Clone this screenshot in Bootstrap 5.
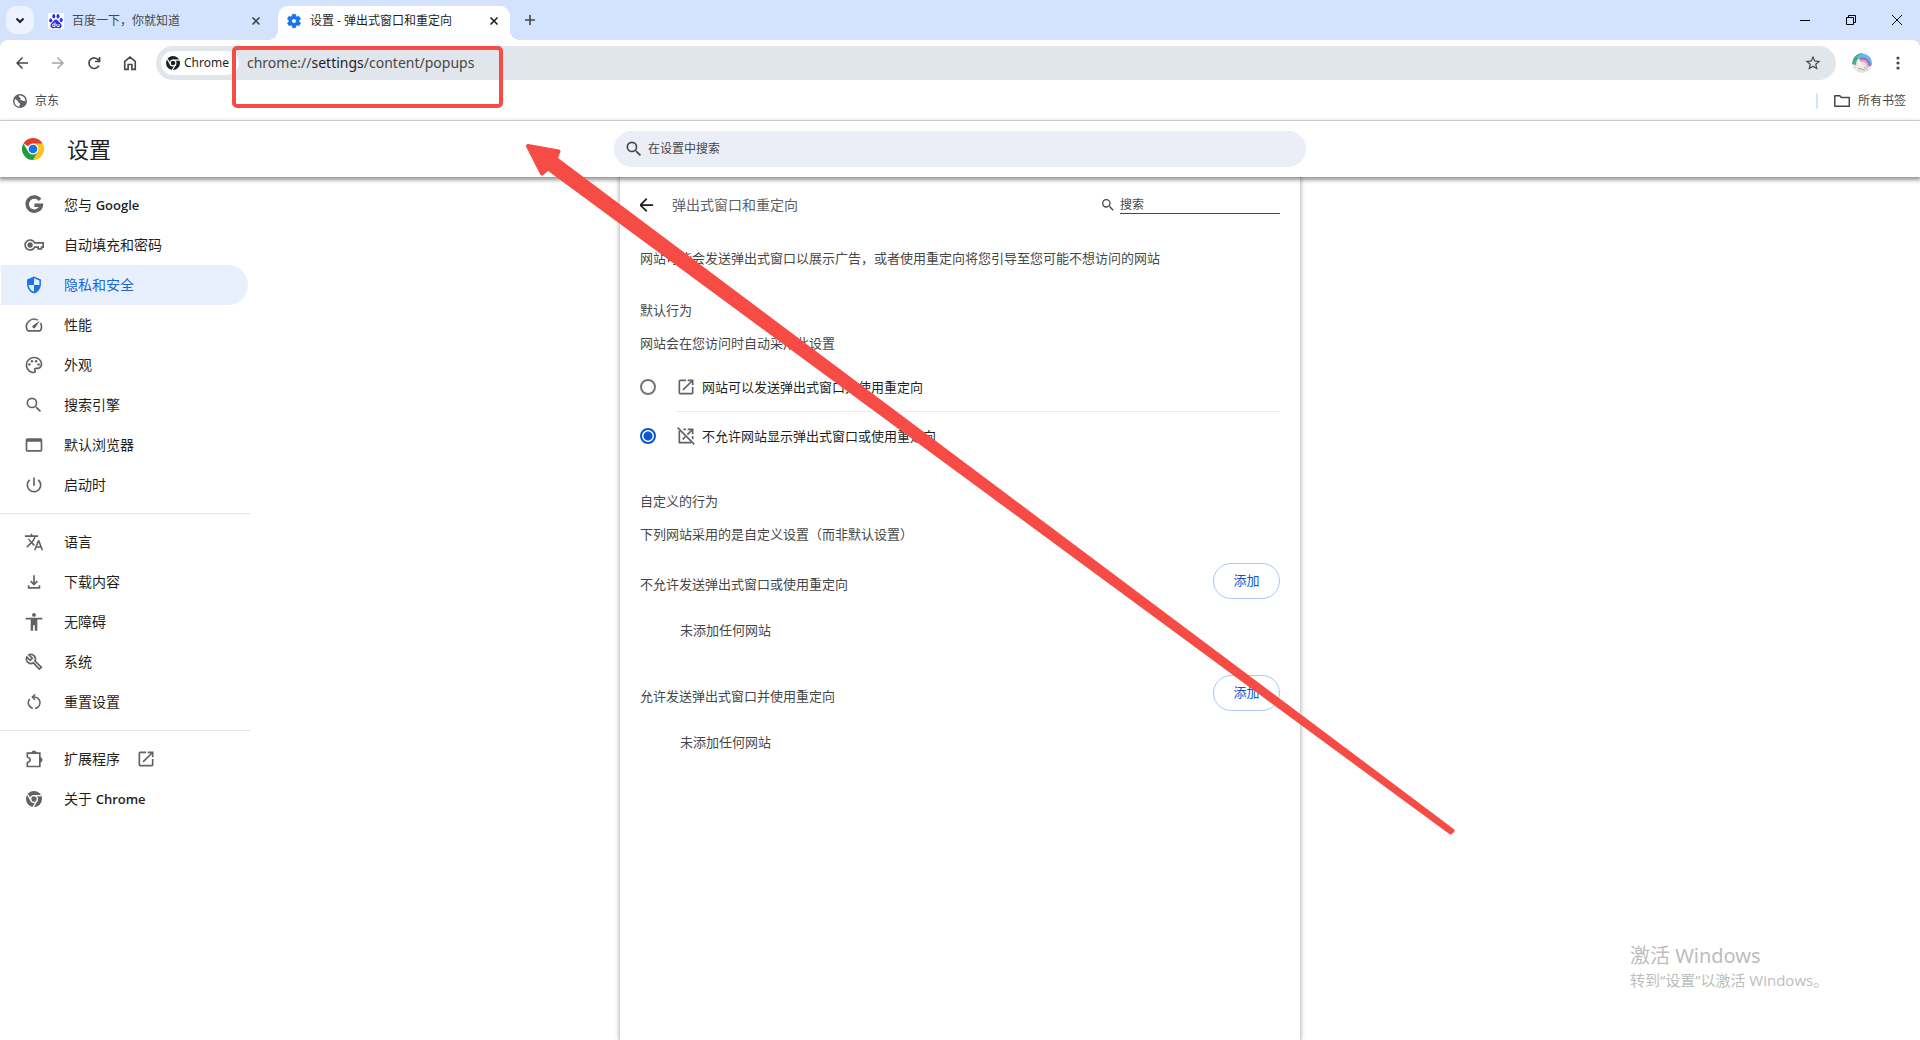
<!DOCTYPE html>
<html lang="zh-CN">
<head>
<meta charset="utf-8">
<meta name="viewport" content="width=device-width, initial-scale=1">
<title>设置 - 弹出式窗口和重定向</title>
<link rel="stylesheet" href="https://cdn.jsdelivr.net/npm/bootstrap@5.3.0/dist/css/bootstrap.min.css">
<style>
body{font-family:"Open Sans","Noto Sans CJK SC",sans-serif;font-size:13px;line-height:20px;color:#474747;background:#fff;overflow-x:hidden}
svg{display:block;flex:none}
.ic{fill:currentColor}
.ic20{width:20px;height:20px}
.ic18{width:18px;height:18px}
.ic16{width:16px;height:16px}
.plain{border:0;background:none;padding:0;color:inherit;display:flex;align-items:center;justify-content:center;flex:none}
/* tab strip */
.tabstrip{background:#d3e3fd;height:40px;font-size:12px;padding:6px 0 0 6px}
.tabmenu{width:28px;height:28px;border-radius:10px;background:#ecf3fe;color:#1f1f1f}
.tab{height:34px;padding-bottom:5px}
.tab-idle{width:244px;padding-left:14px;padding-right:14px}
.tab-on{width:232px;background:#fff;border-radius:10px 10px 0 0;padding-left:8px;padding-right:8px;color:#1f1f1f;position:relative}
.tab-on::before,.tab-on::after{content:"";position:absolute;bottom:0;width:10px;height:10px}
.tab-on::before{left:-10px;background:radial-gradient(circle at 0 0,transparent 10px,#fff 10px)}
.tab-on::after{right:-10px;background:radial-gradient(circle at 100% 0,transparent 10px,#fff 10px)}
.close-btn{width:16px;height:16px}
.tabadd{height:28px}
.winbtn{width:46px;height:28px;color:#000}
/* toolbar */
.chromebar{background:#d3e3fd}
.toolbar{background:#fff;border-radius:8px 8px 0 0;padding:6px 4px 0 4px}
.navbtn{width:36px;height:34px;color:#474747}
.omnibox{height:34px;border-radius:17px;background:#e1e5ec;margin-left:8px;padding:0 14px 0 5px}
.chip{height:24px;border-radius:12px;background:#fff;padding:0 0 0 5px;width:78px;color:#1f1f1f;font-family:"Noto Sans","Noto Sans CJK SC",sans-serif;font-size:12px}
.url{font-family:"Noto Sans","Noto Sans CJK SC",sans-serif;font-size:14px;padding-left:8px;color:#474747}
.url b{font-weight:400;color:#1f1f1f}
.bookmarks{height:41px;font-size:12px;border-bottom:1px solid #dfe1e5;padding:1px 14px 0 13px}
.bookmarks a{color:#474747}
.sep{width:2px;height:16px;border-radius:1px;background:#d3e3fd;margin-right:16px}
/* settings */
.three{display:grid}
.three-head{grid-template-columns:1fr minmax(0,692px) 1fr}
.three-body{grid-template-columns:1fr minmax(0,680px) 1fr}
.sethead{height:56px;position:relative;z-index:2;background:#fff;box-shadow:0 2px 4px 1px rgba(0,0,0,.42)}
.sethead h1{font-size:22px;line-height:32px;font-weight:400;color:#1f1f1f}
.brandbox{padding-left:22px;gap:23px}
.findbox{height:36px;border-radius:18px;background:#ebeef7;padding:0 10px;gap:4px}
.findbox input,.sitefind input{border:0;background:none;outline:0;padding:0;font-size:12px;line-height:20px;color:#474747}
.findbox input::placeholder,.sitefind input::placeholder{color:#474747;opacity:1}
.side{width:250px;padding-top:8px;font-size:14px}
.side a{height:40px;width:247px;margin-left:1px;padding-left:23px;gap:20px;border-radius:0 20px 20px 0;color:#1f1f1f}
.side .latin{font-size:13px;font-weight:600}
.side svg{color:#5f6368}
.side .ext{margin-left:-4px}
.side a.active{background:#e8f0fe;color:#1967d2}
.side a.active svg{color:#1a73e8}
.side hr{margin:8px 0;border:0;border-top:1px solid #e4e4e4;opacity:1}
.panel{background:#fff;box-shadow:0 0 4px 1px rgba(0,0,0,.3);padding:0 20px}
.panel-title{height:56px}
.panel-title h2{font-size:14px;line-height:20px;font-weight:400;color:#5f6368;margin-left:18px}
.sitefind{gap:4px}
.sitefind input{width:160px;border-bottom:1px solid #474747;height:18px}
.intro{height:50px}
.cap{height:24px;font-size:13px;font-weight:400;margin:0}
.choice{height:48px;color:#1f1f1f;font-size:13px}
.choice .form-check-input{width:16px;height:16px;border:2px solid #757575;margin:0 20px 0 0;float:none;box-shadow:none;background-color:#fff;flex:none}
.choice .form-check-input:checked{border-color:#0b57d0;background-image:radial-gradient(circle,#0b57d0 4px,transparent 5px);background-size:100% 100%}
.choice svg{color:#5f6368;margin-right:6px}
.rule{border-top:1px solid #ebebeb;margin-left:36px}
.sect{margin-top:30px}
.listhead{height:44px}
.addbtn{height:36px;width:67px;border-radius:18px;border:1px solid #a8c7fa;color:#0b57d0;font-size:13px;background:#fff;padding:0;margin-top:1px}
.empty{height:40px;margin-top:4px;padding-left:40px}
/* annotation and watermark */
.notes{position:absolute;left:0;top:0;z-index:10;pointer-events:none}
.wmark{position:absolute;right:92px;bottom:48px;width:198px;color:#bdbdbd;font-size:15px;line-height:24px;white-space:nowrap}
.wmark strong{display:block;font-family:"Noto Sans","Noto Sans CJK SC",sans-serif;font-weight:400;font-size:20px}
</style>
<script src="https://cdn.jsdelivr.net/npm/bootstrap@5.3.0/dist/js/bootstrap.bundle.min.js"></script>
</head>
<body class="d-flex flex-column min-vh-100 position-relative">
<svg width="0" height="0" class="position-absolute">
<symbol id="mag" viewBox="0 0 24 24"><path d="M15.5 14h-.79l-.28-.27A6.47 6.47 0 0 0 16 9.5 6.5 6.5 0 1 0 9.5 16c1.61 0 3.09-.59 4.23-1.57l.27.28v.79l5 4.99L20.49 19l-4.99-5zm-6 0a4.5 4.5 0 1 1 0-9 4.5 4.5 0 0 1 0 9z"/></symbol>
<symbol id="open" viewBox="0 0 24 24"><path d="M19 19H5V5h7V3H5a2 2 0 0 0-2 2v14a2 2 0 0 0 2 2h14c1.1 0 2-.9 2-2v-7h-2v7zM14 3v2h3.59l-9.83 9.83 1.41 1.41L19 6.41V10h2V3h-7z"/></symbol>
<symbol id="back" viewBox="0 0 24 24"><path d="M20 11H7.83l5.59-5.59L12 4l-8 8 8 8 1.41-1.41L7.83 13H20z"/></symbol>
<symbol id="x" viewBox="0 0 16 16"><path d="M4.500 4.500l7 7M11.500 4.500l-7 7" fill="none" stroke="currentColor" stroke-width="1.600"/></symbol>
<symbol id="chr" viewBox="0 0 24 24"><circle cx="12" cy="12" r="12"/><circle cx="12" cy="12" r="5" fill="none" stroke="#fff" stroke-width="2"/><path d="M12 7h11M7.7 14.5L2.2 5M16.3 14.5L10.8 24" stroke="#fff" stroke-width="2" fill="none"/></symbol>
</svg>

<header class="chromebar">
<div class="tabstrip d-flex">
  <button class="plain tabmenu" aria-label="搜索标签页"><svg class="ic16" viewBox="0 0 16 16"><path d="M4.500 6.500L8 10l3.500-3.500" fill="none" stroke="currentColor" stroke-width="2"/></svg></button>
  <div class="tab tab-idle d-flex align-items-center">
    <svg class="ic16" viewBox="0 0 16 16"><rect width="16" height="16" fill="#fff"/><g fill="#2932e1"><ellipse cx="2.800" cy="7.500" rx="1.600" ry="2.100"/><ellipse cx="5.800" cy="3.300" rx="1.500" ry="2.200"/><ellipse cx="10" cy="3.300" rx="1.500" ry="2.200"/><ellipse cx="13.200" cy="7.100" rx="1.600" ry="2.100"/><path d="M8 6.400c1.500 0 2.100 1.400 3.200 2.500s2.600 2 2.400 4c-.2 1.800-1.600 2.500-3 2.300-1.700-.3-3.500-.3-5.200 0-1.500.2-2.900-.7-3-2.400-.1-2 1.500-2.700 2.500-3.900S6.500 6.400 8 6.400z"/></g><path d="M7 9.500v4H5.500a1 1 0 0 1 0-2.300H7M8.800 11v1.700c0 .6.300.8.800.8h1.500V11" fill="none" stroke="#fff"/></svg>
    <span class="ms-2 flex-grow-1">百度一下，你就知道</span>
    <button class="plain close-btn" aria-label="关闭标签页"><svg class="ic16"><use href="#x"/></svg></button>
  </div>
  <div class="tab tab-on d-flex align-items-center">
    <svg class="ic16" viewBox="0 0 24 24" fill="#1a73e8"><path d="M19.430 12.980c.04-.32.07-.64.07-.98s-.03-.66-.07-.98l2.110-1.650c.19-.15.24-.42.12-.64l-2-3.460c-.12-.22-.39-.3-.61-.22l-2.490 1c-.52-.4-1.080-.73-1.690-.98l-.38-2.650A.49.49 0 0 0 14 2h-4c-.25 0-.46.180-.49.420l-.38 2.650c-.61.250-1.170.590-1.690.980l-2.490-1c-.23-.09-.49 0-.61.220l-2 3.460c-.13.220-.07.490.12.640l2.110 1.650c-.04.320-.07.650-.07.980s.03.660.07.980l-2.110 1.650c-.19.150-.24.420-.12.640l2 3.460c.12.220.39.3.61.220l2.490-1c.52.4 1.080.730 1.690.980l.38 2.650c.03.240.24.420.49.420h4c.25 0 .46-.18.49-.42l.38-2.650c.61-.25 1.170-.59 1.690-.98l2.490 1c.23.09.49 0 .61-.22l2-3.460c.12-.22.07-.49-.12-.64l-2.110-1.650zM12 15.500a3.500 3.500 0 1 1 0-7 3.500 3.500 0 0 1 0 7z" stroke="#1a73e8"/></svg>
    <span class="ms-2 flex-grow-1">设置 - 弹出式窗口和重定向</span>
    <button class="plain close-btn" aria-label="关闭标签页"><svg class="ic16"><use href="#x"/></svg></button>
  </div>
  <button class="plain ms-2 tabadd" aria-label="打开新的标签页"><svg width="24" height="28" viewBox="0 0 24 28"><path d="M12 9v10M7 14h10" stroke="currentColor" stroke-width="1.600"/></svg></button>
  <div class="d-flex ms-auto">
    <button class="plain winbtn" aria-label="最小化"><svg width="10" height="10"><path d="M0 5.500h10" stroke="#000"/></svg></button>
    <button class="plain winbtn" aria-label="还原"><svg width="10" height="10" fill="none" stroke="#000"><path d="M.5 2.500h7v7h-7zM2.500 2.500v-2h7v7h-2"/></svg></button>
    <button class="plain winbtn" aria-label="关闭"><svg width="10" height="10"><path d="M0 0l10 10M10 0L0 10" stroke="#000"/></svg></button>
  </div>
</div>
<div class="toolbar d-flex align-items-center">
  <button class="plain navbtn" aria-label="后退"><svg class="ic ic18"><use href="#back"/></svg></button>
  <button class="plain navbtn" aria-label="前进" disabled><svg class="ic18" viewBox="0 0 24 24" fill="#a6a6a6"><path d="M4 11h12.170l-5.590-5.590L12 4l8 8-8 8-1.410-1.410L16.170 13H4z"/></svg></button>
  <button class="plain navbtn" aria-label="重新加载"><svg class="ic18" viewBox="0 0 24 24" fill="none" stroke="currentColor" stroke-width="2.200"><path d="M18.500 15.500A7 7 0 1 1 18 8.200l1 1.300M19.400 4v6h-6"/></svg></button>
  <button class="plain navbtn" aria-label="主页"><svg class="ic18" viewBox="0 0 24 24" fill="none" stroke="currentColor" stroke-width="2.200"><path d="M5 20.500V9.700l7-5.700 7 5.700v10.800h-4.500v-6.500h-5v6.500z"/></svg></button>
  <div class="omnibox d-flex align-items-center flex-grow-1">
    <div class="chip d-flex align-items-center"><svg width="14" height="14" fill="#1f1f1f" class="me-1"><use href="#chr"/></svg>Chrome</div>
    <div class="url flex-grow-1">chrome://<b>settings</b>/content/popups</div>
    <button class="plain" aria-label="为此标签页添加书签"><svg class="ic ic18" viewBox="0 0 24 24"><path d="M22 9.240l-7.190-.62L12 2 9.190 8.630 2 9.240l5.460 4.730L5.820 21 12 17.270 18.180 21l-1.630-7.030L22 9.240zM12 15.400l-3.760 2.270 1-4.280-3.320-2.880 4.380-.38L12 6.100l1.710 4.040 4.380.38-3.320 2.880 1 4.280L12 15.400z"/></svg></button>
  </div>
  <button class="plain ms-3" aria-label="个人资料"><svg class="ic20" viewBox="0 0 20 20"><defs><clipPath id="av"><circle cx="10" cy="10" r="10"/></clipPath></defs><g clip-path="url(#av)"><rect width="20" height="20" fill="#e4e3e4"/><path d="M0 11C0 3 7 0 10 0l3 2C6 4 4 8 4 12z" fill="#43b08b"/><path d="M6 5c6-5 12 0 14 7" fill="none" stroke="#69b9e8" stroke-width="4"/><path d="M8 6c5-2 9 2 10 7" fill="none" stroke="#8d6fd8" stroke-width="2.500"/><path d="M8 8c4-1 7 1 8 6" fill="none" stroke="#ee9eb5" stroke-width="2"/><path d="M5 7l3 1 2 4 4 2-1 2-6-1-4 2 2-4z" fill="#f4efe6"/><path d="M6 15l7 2M12 14l3 2" stroke="#999" stroke-width=".8"/></g></svg></button>
  <button class="plain ms-2 moremenu" aria-label="更多"><svg width="36" height="20" fill="#474747"><circle cx="18" cy="5" r="1.600"/><circle cx="18" cy="10" r="1.600"/><circle cx="18" cy="15" r="1.600"/></svg></button>
</div>
<div class="bookmarks bg-white d-flex align-items-center">
  <a href="#" class="d-flex align-items-center gap-2 text-decoration-none"><svg width="14" height="14" viewBox="0 0 14 14"><circle cx="7" cy="7" r="7" fill="#5f6368"/><path d="M2 4.500c1 2 3 1.500 3 3s2 1 2 2.500-1 1.500-.5 2.500c-2.500 0-5-2-5-5zM6 1.500c-.5 2 1 1.500 1.500 2.500S6.500 6 8 6s2 1.500 4.500 1C12.500 4 10 1.300 6 1.500z" fill="#fff"/></svg>京东</a>
  <span class="sep ms-auto"></span>
  <a href="#" class="d-flex align-items-center gap-2 text-decoration-none"><svg width="16" height="16" viewBox="0 0 16 16" fill="none" stroke="#474747" stroke-width="1.500"><path d="M.8 2.800h5l1.500 1.700h8v8.700H.8z" stroke-linejoin="round"/></svg>所有书签</a>
</div>
</header>

<div class="sethead three three-head align-items-center">
  <div class="brandbox d-flex align-items-center">
    <svg width="22" height="22" viewBox="0 0 48 48"><path d="M24 24L3.200 12A24 24 0 0 1 44.800 12z" fill="#e33b2e"/><path d="M24 12h20.800A24 24 0 0 1 24 48l10.400-18z" fill="#fcc31e"/><path d="M13.600 30L3.200 12A24 24 0 0 0 24 48l10.400-18z" fill="#249a42"/><circle cx="24" cy="24" r="12" fill="#fff"/><circle cx="24" cy="24" r="9.500" fill="#1a73e8"/></svg>
    <h1 class="m-0">设置</h1>
  </div>
  <label class="findbox d-flex align-items-center"><svg class="ic ic20"><use href="#mag"/></svg><input class="flex-grow-1" type="search" placeholder="在设置中搜索" aria-label="在设置中搜索"></label>
</div>

<div class="three three-body flex-grow-1">
  <nav class="side">
    <a href="#" class="d-flex align-items-center text-decoration-none"><svg class="ic20" viewBox="0 0 24 24" fill="none" stroke="currentColor" stroke-width="4.200"><path d="M19.200 5.800A8.500 8.500 0 1 0 20.800 12.200H12.500"/></svg><span>您与 <span class="latin">Google</span></span></a>
    <a href="#" class="d-flex align-items-center text-decoration-none"><svg class="ic20" viewBox="0 0 24 24" fill="none" stroke="currentColor" stroke-width="2"><path d="M12.800 9.500H23v5h-2v2.200h-4v-2.200h-4.200A6 6 0 1 1 12.800 9.500z"/><circle cx="7.300" cy="12" r="2.200" fill="currentColor"/></svg>自动填充和密码</a>
    <a href="#" class="active d-flex align-items-center text-decoration-none" aria-current="page"><svg class="ic ic20" viewBox="-1 -1 26 26"><path fill-rule="evenodd" d="M12 1L3 5v6c0 5.550 3.840 10.740 9 12 5.160-1.260 9-6.450 9-12V5l-9-4zM12 3.190l7 3.110V12h-7zM12 12v8.930C8.280 19.780 5.530 16.110 5 12z"/></svg>隐私和安全</a>
    <a href="#" class="d-flex align-items-center text-decoration-none"><svg class="ic ic20" viewBox="0 0 24 24"><path d="M20.380 8.570l-1.230 1.850a8 8 0 0 1-.22 7.580H5.070A8 8 0 0 1 15.580 6.850l1.850-1.230A10 10 0 0 0 3.350 19a2 2 0 0 0 1.720 1h13.850a2 2 0 0 0 1.740-1 10 10 0 0 0-.27-10.440z"/><path d="M10.590 15.410a2 2 0 0 0 2.830 0l5.660-8.490-8.490 5.660a2 2 0 0 0 0 2.830z"/></svg>性能</a>
    <a href="#" class="d-flex align-items-center text-decoration-none"><svg class="ic ic20" viewBox="0 0 24 24"><path d="M12 22C6.490 22 2 17.510 2 12S6.490 2 12 2s10 4.040 10 9c0 3.310-2.690 6-6 6h-1.770c-.28 0-.5.220-.5.500 0 .120.050.230.130.330.410.470.640 1.060.640 1.670A2.500 2.500 0 0 1 12 22zm0-18c-4.410 0-8 3.590-8 8s3.590 8 8 8c.28 0 .5-.22.5-.5a.54.54 0 0 0-.14-.35c-.41-.46-.63-1.050-.63-1.650a2.500 2.500 0 0 1 2.500-2.500H16c2.210 0 4-1.790 4-4 0-3.860-3.590-7-8-7z"/><circle cx="6.500" cy="11.500" r="1.500"/><circle cx="9.500" cy="7.500" r="1.500"/><circle cx="14.500" cy="7.500" r="1.500"/><circle cx="17.500" cy="11.500" r="1.500"/></svg>外观</a>
    <a href="#" class="d-flex align-items-center text-decoration-none"><svg class="ic ic20"><use href="#mag"/></svg>搜索引擎</a>
    <a href="#" class="d-flex align-items-center text-decoration-none"><svg class="ic ic20" viewBox="0 0 24 24"><path d="M20 4H4a2 2 0 0 0-2 2v12a2 2 0 0 0 2 2h16a2 2 0 0 0 2-2V6a2 2 0 0 0-2-2zm0 14H4V8h16v10z"/></svg>默认浏览器</a>
    <a href="#" class="d-flex align-items-center text-decoration-none"><svg class="ic ic20" viewBox="0 0 24 24"><path d="M13 3h-2v10h2V3zm4.830 2.170l-1.420 1.420A6.920 6.920 0 0 1 19 12a7 7 0 1 1-11.420-5.420L6.170 5.170A8.930 8.930 0 0 0 3 12a9 9 0 0 0 18 0c0-2.740-1.230-5.180-3.170-6.830z"/></svg>启动时</a>
    <hr>
    <a href="#" class="d-flex align-items-center text-decoration-none"><svg class="ic ic20" viewBox="0 0 24 24"><path d="M12.870 15.070l-2.540-2.510.03-.03A17.520 17.520 0 0 0 14.070 6H17V4h-7V2H8v2H1v1.990h11.170C11.500 7.920 10.440 9.750 9 11.350 8.070 10.320 7.300 9.190 6.690 8h-2c.73 1.630 1.730 3.170 2.980 4.560l-5.090 5.020L4 19l5-5 3.110 3.110.76-2.040zM18.500 10h-2L12 22h2l1.120-3h4.750L21 22h2l-4.500-12zm-2.620 7l1.620-4.330L19.120 17h-3.240z"/></svg>语言</a>
    <a href="#" class="d-flex align-items-center text-decoration-none"><svg class="ic20" viewBox="0 0 24 24" fill="none" stroke="currentColor" stroke-width="2"><path d="M12 4v11M8 11l4 4 4-4M5.500 16v3h13v-3"/></svg>下载内容</a>
    <a href="#" class="d-flex align-items-center text-decoration-none"><svg class="ic ic20" viewBox="0 0 24 24"><circle cx="12" cy="3.500" r="2.300"/><path d="M22 9h-6v13.500h-3V16h-2v6.500H8V9H2V7h20z"/></svg>无障碍</a>
    <a href="#" class="d-flex align-items-center text-decoration-none"><svg class="ic20" viewBox="0 0 24 24" fill="none" stroke="currentColor" stroke-width="2"><path d="M6 3.400l4 4-2.600 2.600-4-4a5.500 5.500 0 0 0 7.800 7L18.400 20.600l2.400-2.400-7.600-7.400A5.500 5.500 0 0 0 6 3.400z"/></svg>系统</a>
    <a href="#" class="d-flex align-items-center text-decoration-none"><svg class="ic20" viewBox="-1 -1 26 26" fill="none" stroke="currentColor" stroke-width="2"><path d="M10.500 20.300A7.500 7.500 0 0 1 6.500 8M9 6.200q1.500-.8 3-.8A7.500 7.500 0 0 1 13.500 20.300M13.500 2L10 5.500 13.500 9"/></svg>重置设置</a>
    <hr>
    <a href="#" class="d-flex align-items-center text-decoration-none"><svg class="ic20" viewBox="0 0 24 24" fill="none" stroke="currentColor" stroke-width="2"><path d="M4 5h15v16H4v-4.500c4.500-1.500 4.500-5.500 0-7z"/><path d="M10 4a2.200 2.200 0 0 1 4 0zM20 11a2.200 2.200 0 0 1 0 4z" fill="currentColor"/></svg>扩展程序<svg class="ic ic20 ext"><use href="#open"/></svg></a>
    <a href="#" class="d-flex align-items-center text-decoration-none"><svg class="ic ic20" viewBox="-3 -3 30 30"><use href="#chr" x="0" y="0" width="24" height="24"/></svg><span>关于 <span class="latin">Chrome</span></span></a>
  </nav>

  <main class="panel">
    <div class="panel-title d-flex align-items-center">
      <button class="plain" aria-label="返回"><svg width="14" height="14" viewBox="5 4 16 16" fill="#1f1f1f"><use href="#back" x="0" y="0" width="24" height="24"/></svg></button>
      <h2 class="mb-0 me-auto">弹出式窗口和重定向</h2>
      <label class="sitefind d-flex align-items-center"><svg class="ic ic16"><use href="#mag"/></svg><input type="search" placeholder="搜索" aria-label="搜索"></label>
    </div>
    <div class="intro d-flex align-items-center">网站可能会发送弹出式窗口以展示广告，或者使用重定向将您引导至您可能不想访问的网站</div>
    <h3 class="cap d-flex align-items-center mt-3">默认行为</h3>
    <div class="cap d-flex align-items-center mt-2">网站会在您访问时自动采用此设置</div>
    <label class="choice d-flex align-items-center mt-2"><input class="form-check-input" type="radio" name="popups"><svg class="ic ic20"><use href="#open"/></svg>网站可以发送弹出式窗口并使用重定向</label>
    <div class="rule"></div>
    <label class="choice d-flex align-items-center"><input class="form-check-input" type="radio" name="popups" checked><svg class="ic20" viewBox="0 0 24 24" fill="none" stroke="currentColor" stroke-width="2"><path d="M4 6v14h14M9 4h3M14 4h6v6M20 12v4M19.500 4.500l-5.800 5.800M8 16l3-3M2 2l20 20"/></svg>不允许网站显示弹出式窗口或使用重定向</label>
    <section class="sect">
      <h3 class="cap d-flex align-items-center">自定义的行为</h3>
      <div class="cap d-flex align-items-center mt-2">下列网站采用的是自定义设置（而非默认设置）</div>
    </section>
    <section class="mt-3">
      <div class="listhead d-flex align-items-center justify-content-between"><span>不允许发送弹出式窗口或使用重定向</span><button class="btn addbtn align-self-start">添加</button></div>
      <div class="empty d-flex align-items-center">未添加任何网站</div>
    </section>
    <section class="mt-4">
      <div class="listhead d-flex align-items-center justify-content-between"><span>允许发送弹出式窗口并使用重定向</span><button class="btn addbtn align-self-start">添加</button></div>
      <div class="empty d-flex align-items-center">未添加任何网站</div>
    </section>
  </main>
</div>

<div class="wmark"><strong>激活 Windows</strong>转到“设置”以激活 Windows。</div>
<svg class="notes" width="1460" height="840" fill="#f74b46">
  <rect x="234" y="48" width="267" height="58" rx="3" fill="none" stroke="#f74b46" stroke-width="4"/>
  <path d="M528 146L558.500 151.500 555.500 158.500 1452.500 830.500 1450.500 832.500 548 168.500 542 173.500z" stroke="#f74b46" stroke-width="4" stroke-linejoin="round"/>
</svg>
</body>
</html>
